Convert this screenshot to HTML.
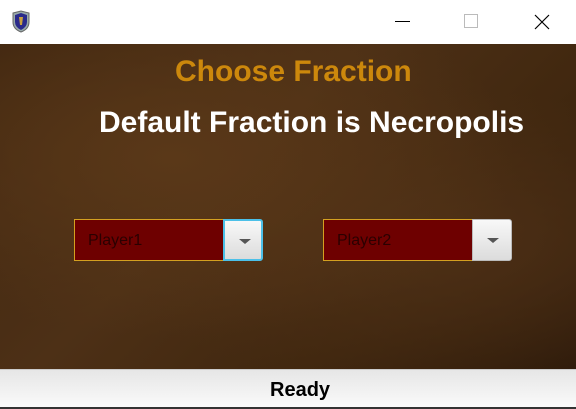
<!DOCTYPE html>
<html><head><style>
*{margin:0;padding:0;box-sizing:border-box}
body{width:576px;height:409px;overflow:hidden;background:#fff;font-family:"Liberation Sans",sans-serif;position:relative}
.tb{position:absolute;left:0;top:0;width:576px;height:44px;background:#fff}
.main{position:absolute;left:0;top:44px;width:576px;height:325px;
background:radial-gradient(ellipse at 30% 35%,#5a3818 0%,transparent 60%),radial-gradient(ellipse at 75% 60%,#4e3016 0%,transparent 55%),linear-gradient(135deg,#3f2610,#4d3016 40%,#40270f 70%,#2e1b0b);}
.t1{position:absolute;top:55px;left:175px;color:#cc880c;font-weight:bold;font-size:30px;white-space:nowrap}
.t2{position:absolute;top:106px;left:99px;color:#fff;font-weight:bold;font-size:30px;white-space:nowrap}
.cb{position:absolute;top:219px;height:42px;width:189px}
.cb .f{position:absolute;left:0;top:0;width:150px;height:42px;background:#6e0000;border:1px solid #d4a020;color:#2a0000;font-size:16px;padding:12px 0 0 13px}
.cb .b{position:absolute;left:149px;top:0;width:40px;height:42px;background:linear-gradient(#f8f8f8,#dcdcdc);border:1px solid #bbb;border-radius:0 3px 3px 0}
.cb .b:after{content:"";position:absolute;left:14px;top:18px;border-left:6px solid transparent;border-right:6px solid transparent;border-top:5px solid #555}
.sb{position:absolute;left:0;top:369px;width:576px;height:38px;background:linear-gradient(#e6e6e6,#fafafa);border-top:1px solid #ccc;font-weight:bold;font-size:20px;padding:9px 0 0 270px}
.bl{position:absolute;left:0;top:407px;width:576px;height:2px;background:#333}
</style></head><body>
<div class="tb">
<svg style="position:absolute;left:11px;top:10px" width="20" height="23" viewBox="0 0 20 23"><path d="M2 3 L10 1 L18 3 L18 12 Q18 19 10 22 Q2 19 2 12Z" fill="#9aa" stroke="#666"/><path d="M4 5 L10 3 L16 5 L16 12 Q16 17 10 20 Q4 17 4 12Z" fill="#2a2a8a"/><path d="M8 7 L12 7 L11 15 L9 15Z" fill="#c9a040"/></svg>
<div style="position:absolute;left:395px;top:21px;width:15px;height:1px;background:#000"></div>
<div style="position:absolute;left:464px;top:14px;width:14px;height:14px;border:1px solid #bbb"></div>
<svg style="position:absolute;left:534px;top:14px" width="16" height="16"><path d="M1 1L15 15M15 1L1 15" stroke="#000" stroke-width="1.2"/></svg>
</div>
<div class="main"></div>
<div class="t1">Choose Fraction</div>
<div class="t2">Default Fraction is Necropolis</div>
<div class="cb" style="left:74px"><div class="f">Player1</div><div class="b" style="border:2px solid #4cc0e8"></div></div>
<div class="cb" style="left:323px"><div class="f">Player2</div><div class="b"></div></div>
<div class="sb">Ready</div>
<div class="bl"></div>
</body></html>
